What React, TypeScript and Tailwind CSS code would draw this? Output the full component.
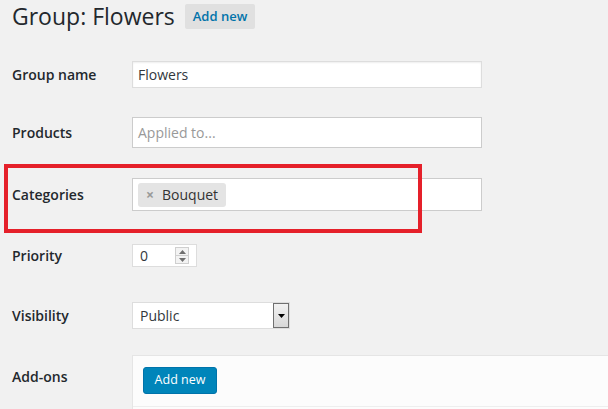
import React from "react";

function Row({ label, children, className = "" }: { label: string; children: React.ReactNode; className?: string }) {
  return (
    <div className={"flex items-center " + className}>
      <div className="w-[132px] shrink-0 pl-3 text-[14px] font-semibold text-[#23282d]">{label}</div>
      {children}
    </div>
  );
}

export default function App() {
  return (
    <div
      className="relative w-[608px] h-[409px] overflow-hidden bg-[#f1f1f1] text-[#23282d]"
      style={{ fontFamily: '"Open Sans", "Noto Sans", sans-serif' }}
    >
      {/* header */}
      <div className="flex items-center h-[25px] mt-[4px] pl-3">
        <h1 className="text-[23px] leading-none font-normal text-[#23282d] -mt-[1px]">Group: Flowers</h1>
        <button className="ml-[10px] h-[25px] px-[8px] rounded-[2px] bg-[#e0e0e0] text-[13px] font-semibold text-[#0073aa]">
          Add new
        </button>
      </div>

      {/* Group name */}
      <Row label="Group name" className="mt-[32px]">
        <div className="w-[350px] h-[27px] border border-[#dddddd] bg-white shadow-[inset_0_1px_2px_rgba(0,0,0,0.07)] flex items-center px-[5px] text-[14px] text-[#32373c]">
          Flowers
        </div>
      </Row>

      {/* Products */}
      <Row label="Products" className="mt-[29px]">
        <div className="w-[350px] h-[31px] border border-[#cccccc] bg-white flex items-center px-[5px] text-[14px] text-[#999999]">
          Applied to...
        </div>
      </Row>

      {/* Categories */}
      <Row label="Categories" className="mt-[30px]">
        <div className="w-[350px] h-[33px] border border-[#cccccc] bg-white flex items-center px-[5px]">
          <div className="flex items-center h-[24px] rounded-[3px] bg-[#e4e4e4] pl-[8px] pr-[8px] text-[14px] text-[#333333]">
            <span className="text-[14px] font-bold text-[#999999] mr-[8px] leading-none">×</span>
            Bouquet
          </div>
        </div>
      </Row>

      {/* Priority */}
      <Row label="Priority" className="mt-[33px]">
        <div className="w-[65px] h-[23px] border border-[#dddddd] bg-white flex items-center pl-[7px] pr-[7px] text-[14px] text-[#32373c]">
          <span className="flex-1">0</span>
          <div className="flex flex-col w-[14px] h-[17px] border border-[#cfcfcf]">
            <div className="flex-1 flex items-center justify-center bg-[#f3f3f3] border-b border-[#cfcfcf]">
              <svg width="7" height="4" viewBox="0 0 7 4"><path d="M0 4 L3.5 0 L7 4 Z" fill="#6f6f6f" /></svg>
            </div>
            <div className="flex-1 flex items-center justify-center bg-[#f3f3f3]">
              <svg width="7" height="4" viewBox="0 0 7 4"><path d="M0 0 L3.5 4 L7 0 Z" fill="#6f6f6f" /></svg>
            </div>
          </div>
        </div>
      </Row>

      {/* Visibility */}
      <Row label="Visibility" className="mt-[35px]">
        <div className="w-[158px] h-[27px] border border-[#dddddd] bg-white flex items-center pl-[7px] text-[14px] text-[#32373c]">
          <span className="flex-1">Public</span>
          <div className="w-[16px] h-[25px] border border-[#707070] bg-gradient-to-b from-[#f2f2f2] to-[#d8d8d8] flex items-center justify-center">
            <svg width="7" height="4" viewBox="0 0 7 4"><path d="M0 0 L3.5 4 L7 0 Z" fill="#000" /></svg>
          </div>
        </div>
      </Row>

      {/* Add-ons */}
      <div className="flex mt-[26px]">
        <div className="w-[132px] shrink-0 pl-3 pt-[11px] text-[14px] font-semibold text-[#23282d]">Add-ons</div>
        <div className="flex-1 min-w-[480px] h-[60px] border border-[#e5e5e5] bg-[#fcfcfc] pl-[10px] pt-[10px]">
          <button className="h-[27px] w-[74px] rounded-[3px] bg-[#0085ba] border border-[#0073aa] text-white text-[12.5px]">
            Add new
          </button>
          <div className="mt-[12px] -ml-[10px] border-t border-[#eeeeee]" />
        </div>
      </div>

      {/* red annotation box */}
      <div className="absolute left-[4px] top-[164px] w-[418px] h-[69px] border-[4px] border-[#e5202a] pointer-events-none" />
    </div>
  );
}
